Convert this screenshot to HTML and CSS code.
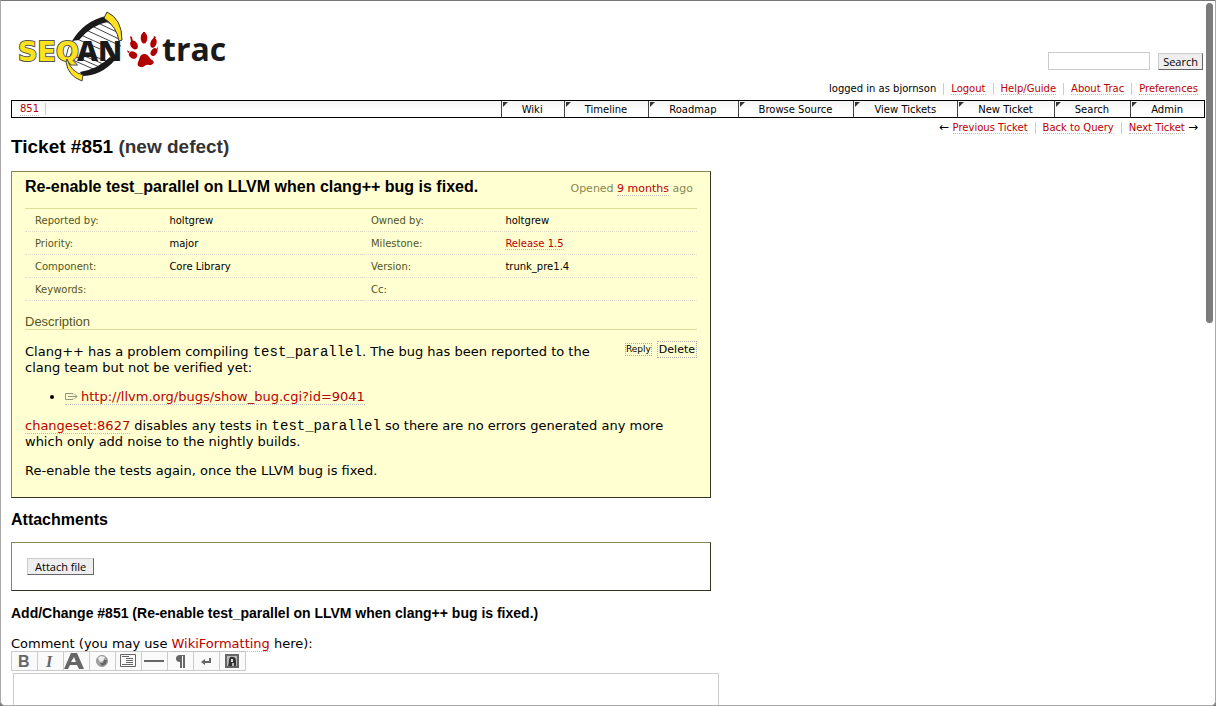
FILE: index.html
```html
<!DOCTYPE html>
<html lang="en">
<head>
<meta charset="utf-8">
<title>#851 (Re-enable test_parallel on LLVM when clang++ bug is fixed.) - SeqAn</title>
<link rel="stylesheet" href="styles.css">
</head>
<body>
<div class="window">
<header class="banner">
  <a class="logo" href="#" aria-label="SeqAn trac">
    <svg width="216" height="76" viewBox="12 8 216 76">
      <path d="M73 40Q85 22 107 19L122 37Q117 51 103 65L82 74L67 61Z" fill="#fff"/>
      <g stroke="#444" stroke-width="1" fill="none">
        <path d="M105 21L119 28M98 23L121 34M92 26L121 40M86 30L121 46M81 35L112 49M77 39L100 49M70 54L84 60M68 58L98 71M72 55L104 69M82 55L108 66M96 57L112 63"/>
        <path d="M72 41Q67 49 66 57"/>
      </g>
      <path d="M72 41Q84 21 106 16L111 21Q91 25 79 40Z" fill="#1a1a1a"/>
      <path d="M80 72Q98 69 110 57L115 60Q101 76 82 76Z" fill="#1a1a1a"/>
      <path d="M107 12Q122 19 122 40L119 41Q117 27 104 18Z" fill="#ffe11c" stroke="#333"/>
      <text class="logo-seq" x="18" y="61">SEQ</text>
      <path d="M67 59Q71 72 83 75L82 81Q68 76 66 62Z" fill="#ffe11c" stroke="#444"/>
      <text class="logo-an" x="77" y="61">AN</text>
      <g fill="#b00000">
        <ellipse cx="144" cy="38" rx="3.3" ry="5.6"/>
        <ellipse cx="134" cy="45" rx="3.4" ry="4.8" transform="rotate(-35 134 45)"/>
        <ellipse cx="153.500" cy="43" rx="3" ry="5" transform="rotate(18 153.500 43)"/>
        <ellipse cx="133" cy="55" rx="3.400" ry="4.300" transform="rotate(-60 133 55)"/>
        <ellipse cx="154" cy="52" rx="2.900" ry="4.200" transform="rotate(35 154 52)"/>
        <path d="M145 54C148 54 149 58 152 60C156 62 152 66 149 65C145 64 144 68 141 67C137 67 137 63 139 60C140 56 141 54 145 54Z"/>
        <path d="M143 32h2v4h-2zM130 36l2 1 1 5-2-1zM154 36l2 1-2 4-1-1zM127 50l3 2-2 1zM157 49l1-3 0 4z"/>
      </g>
      <text class="logo-trac" x="162" y="61">trac</text>
    </svg>
  </a>
  <div class="banner-side">
    <form class="search">
      <input type="text" class="search-box" aria-label="Search">
      <button type="button" class="button">Search</button>
    </form>
    <ul class="links metanav">
      <li>logged in as bjornson</li>
      <li><a href="#">Logout</a></li>
      <li><a href="#">Help/Guide</a></li>
      <li><a href="#">About Trac</a></li>
      <li><a href="#">Preferences</a></li>
    </ul>
  </div>
</header>
<nav class="mainnav">
  <div class="trail"><a href="#">851</a></div>
  <ul class="tabs">
    <li><a href="#">Wiki</a></li>
    <li><a href="#">Timeline</a></li>
    <li><a href="#">Roadmap</a></li>
    <li><a href="#">Browse Source</a></li>
    <li><a href="#">View Tickets</a></li>
    <li><a href="#">New Ticket</a></li>
    <li><a href="#">Search</a></li>
    <li><a href="#">Admin</a></li>
  </ul>
</nav>
<ul class="links ctxtnav">
  <li><span class="arrow">←</span> <a href="#">Previous Ticket</a></li>
  <li><a href="#">Back to Query</a></li>
  <li><a href="#">Next Ticket</a> <span class="arrow">→</span></li>
</ul>
<main>
  <h1 class="title">Ticket #851 <span class="status">(new defect)</span></h1>
  <section class="ticket">
    <div class="ticket-head">
      <h2 class="summary">Re-enable test_parallel on LLVM when clang++ bug is fixed.</h2>
      <p class="date">Opened <a href="#">9 months</a> ago</p>
    </div>
    <table class="properties">
      <tr><th>Reported by:</th><td>holtgrew</td><th>Owned by:</th><td>holtgrew</td></tr>
      <tr><th>Priority:</th><td>major</td><th>Milestone:</th><td><a href="#">Release 1.5</a></td></tr>
      <tr><th>Component:</th><td>Core Library</td><th>Version:</th><td>trunk_pre1.4</td></tr>
      <tr><th>Keywords:</th><td></td><th>Cc:</th><td></td></tr>
    </table>
    <h3 class="description-title">Description</h3>
    <div class="description">
      <div class="actions">
        <button type="button" class="inline-button reply">Reply</button>
        <button type="button" class="inline-button">Delete</button>
      </div>
      <p>Clang++ has a problem compiling <code>test_parallel</code>. The bug has been reported to the<br>clang team but not be verified yet:</p>
      <ul class="bugs">
        <li><a href="#"><svg class="ext" width="13" height="9" viewBox="0 0 13 9" fill="none" stroke="#8c9a78"><path d="M8 2.500V1.500H.500v6H8V6.500M3 4.500h9M9.500 2l2.500 2.500L9.500 7"/></svg>http://llvm.org/bugs/show_bug.cgi?id=9041</a></li>
      </ul>
      <p><a href="#">changeset:8627</a> disables any tests in <code>test_parallel</code> so there are no errors generated any more<br>which only add noise to the nightly builds.</p>
      <p>Re-enable the tests again, once the LLVM bug is fixed.</p>
    </div>
  </section>
  <h2 class="section-title">Attachments</h2>
  <div class="attachments"><button type="button" class="button attach">Attach file</button></div>
  <h3 class="change-title">Add/Change #851 (Re-enable test_parallel on LLVM when clang++ bug is fixed.)</h3>
  <div class="comment">
    <label for="comment">Comment (you may use <a href="#">WikiFormatting</a> here):</label>
    <div class="toolbar">
      <button type="button" aria-label="Bold"><svg viewBox="0 0 25 18"><text class="glyph" x="6" y="15">B</text></svg></button>
      <button type="button" aria-label="Italic"><svg viewBox="0 0 25 18"><text class="glyph italic" x="8" y="15">I</text></svg></button>
      <button type="button" aria-label="Heading"><svg viewBox="0 0 25 18"><path fill="#666" fill-rule="evenodd" d="M0 17L7 1h6l7 16h-5l-2-4H6l-2 4zM7 10h5L10 5z"/></svg></button>
      <button type="button" aria-label="Link"><svg viewBox="0 0 25 18"><circle cx="12" cy="9" r="5.500" fill="#a0a0a0" stroke="#999"/><path d="M8 6l3-2 4 1-2 4-3 1z" fill="#eee"/><path d="M14 8l3 0-1 4-4 2-2-3 3 0z" fill="#666"/></svg></button>
      <button type="button" aria-label="Code block"><svg viewBox="0 0 25 18" fill="none" stroke="#666"><path d="M4.500 2.500h15v12h-15zM6 4.500h7M10 6.500h7M10 8.500h7M10 10.500h7M6 12.500h11"/></svg></button>
      <button type="button" aria-label="Horizontal rule"><svg viewBox="0 0 25 18"><path fill="#666" d="M2 8h20v2H2z"/></svg></button>
      <button type="button" aria-label="New paragraph"><svg viewBox="0 0 25 18"><path fill="#666" d="M12 3h5v13h-2V4h-1v12h-2v-6Q8 10 8 6.500Q8 3 12 3z"/></svg></button>
      <button type="button" aria-label="Line break"><svg viewBox="0 0 25 18"><path fill="#666" d="M15 6h2v5h-6v2l-4-3 4-3v2h4z"/></svg></button>
      <button type="button" aria-label="Image"><svg viewBox="0 0 25 18"><path fill="#666" d="M5 2h14v14H5z"/><path fill="#bbb" d="M7 4h10v10H7z"/><path fill="#333" d="M8 14q1-2 1-7 1-3 4-2 3 0 3 4l0 5h-2v-3h-2v3z"/><path fill="#ddd" d="M11 7h2v3h-2z"/></svg></button>
    </div>
    <textarea id="comment" class="comment-box" rows="10"></textarea>
  </div>
</main>
<div class="scroll-thumb"></div>
</div>
</body>
</html>
```
FILE: styles.css
```css
* { box-sizing: border-box; }
body {
  margin: 0;
  background: #777;
  color: #000;
  font: 13px/16px Verdana, "DejaVu Sans", sans-serif;
}
.window {
  position: relative;
  height: 100vh;
  overflow: hidden;
  padding: 10px 10px 0;
  background: #fff;
  border: 1px solid #aaa;
  border-top-color: #777;
  border-radius: 0 0 5px 5px;
}
h1, h2, h3, p, ul { margin: 0; }
h1, h2, h3 { font-family: Arial, "Liberation Sans", sans-serif; }
ul { padding: 0; list-style: none; }
a { color: #b00; text-decoration: none; border-bottom: 1px dotted #bbb; }
button { font-family: inherit; cursor: pointer; }

.banner {
  display: flex;
  justify-content: space-between;
  height: 89px;
}
.logo { border: 0; }
.logo svg { display: block; margin: -3px 0 0 1px; }
.logo-seq {
  font: bold 27px "DejaVu Sans", sans-serif;
  fill: #ffe11c;
  stroke: #555;
  stroke-width: 2px;
  paint-order: stroke;
}
.logo-an { font: 800 29px "Open Sans", sans-serif; fill: #1a1a1a; }
.logo-trac { font: bold 32px "Open Sans", sans-serif; fill: #1a1a1a; }
.banner-side {
  display: flex;
  flex-direction: column;
  align-items: flex-end;
  justify-content: flex-end;
  gap: 13px;
  padding-bottom: 5px;
}
.search { display: flex; align-items: center; gap: 8px; padding-right: 2px; }
.search-box { width: 102px; height: 18px; border: 1px solid #ccc; }
.button {
  height: 17px;
  padding: 0 4px;
  background: #eee;
  border: 1px solid;
  border-color: #ccc #666 #666 #ccc;
  color: #000;
  font: 11px/15px "Lucida Grande", "Open Sans", sans-serif;
}
.attach { padding: 0 7px; }
.links { display: flex; justify-content: flex-end; font-size: 10px; line-height: 12px; }
.links li { padding: 0 7px; border-left: 1px solid #ccc; white-space: nowrap; }
.links li:first-child { border-left: 0; }

.mainnav {
  display: flex;
  justify-content: space-between;
  height: 18px;
  border: 1px solid #000;
  background: linear-gradient(#f4f4f4, #fff 60%);
  font-size: 10px;
  line-height: 17px;
}
.trail { padding: 0 7px 0 8px; line-height: 16px; }
.trail a { display: inline-block; line-height: 13px; }
.trail::after { content: ""; display: inline-block; height: 12px; margin-left: 6px; border-left: 1px solid #ccc; vertical-align: middle; }
.tabs { display: flex; }
.tabs li {
  padding: 0 21px 0 20px;
  border-left: 1px solid #444;
  background: linear-gradient(135deg, #333 3px, transparent 4px) 1px 1px no-repeat;
}
.tabs a { color: #000; border: 0; }
.ctxtnav { padding-top: 4px; }
.arrow { font-size: 12px; line-height: 1px; }

.title { padding-top: 2px; font-size: 19px; line-height: 22px; }
.status { color: #333; }
.ticket, .attachments {
  max-width: 700px;
  border: 1px solid;
  border-color: #885 #332 #332 #885;
}
.ticket { margin-top: 13px; padding: 5px 13px 18px; background: #ffffd2; }
.ticket-head { display: flex; justify-content: space-between; align-items: center; }
.summary { font-size: 16px; line-height: 19px; }
.date { padding: 3px 4px 0 0; color: #885; font-size: 11px; line-height: 13px; }
.properties {
  width: 100%;
  margin-top: 12px;
  border-top: 1px solid #dd9;
  border-collapse: collapse;
  table-layout: fixed;
  font-size: 10px;
  line-height: 12px;
}
.properties tr { height: 23px; border-bottom: 1px dotted #ddc; }
.properties th, .properties td { padding: 2px 10px 0; text-align: left; font-weight: normal; }
.properties th { width: 20%; color: #552; }
.properties td { width: 30%; }
.description-title {
  margin-top: 13px;
  border-bottom: 1px solid #dd9;
  color: #552;
  font-size: 13px;
  font-weight: normal;
  line-height: 15px;
}
.description { padding-top: 14px; }
.description p + p, .bugs, .bugs + p { margin-top: 13px; }
.bugs { padding-left: 40px; list-style: disc; }
.ext { margin-right: 3px; }
code { font: 14px/15px "Liberation Mono", monospace; }
.actions { float: right; display: flex; align-items: center; gap: 5px; margin-top: -3px; }
.inline-button {
  padding: 0 1px;
  background: transparent;
  border: 1px dotted #aaa;
  font-size: 11px;
  line-height: 15px;
}
.reply { padding: 0; font-size: 9px; line-height: 11px; }
.section-title { margin: 12px 0 13px; font-size: 16px; line-height: 19px; }
.attachments { display: flex; height: 49px; align-items: center; padding: 0 15px; }
.change-title { margin-top: 14px; font-size: 14px; line-height: 17px; }
.comment { margin-top: 14px; }
.comment label { display: block; line-height: 15px; }
.toolbar { display: flex; width: max-content; border: 1px solid #ccc; }
.toolbar button {
  width: 26px;
  padding: 0;
  border: 0;
  border-right: 1px solid #ccc;
  background: #fafafa;
}
.toolbar button:last-child { border-right: 0; width: 25px; }
.toolbar svg { display: block; width: 25px; height: 18px; }
.glyph { font: bold 16px "Liberation Sans", sans-serif; fill: #666; }
.italic { font: italic bold 16px "Liberation Serif", serif; }
.comment-box { display: block; width: 100%; max-width: 706px; margin: 2px; border: 1px solid #ccc; resize: none; }
.scroll-thumb {
  position: absolute;
  top: 2px;
  right: 2px;
  width: 7px;
  height: 320px;
  border-radius: 4px;
  background: #7b7b7b;
}
```
